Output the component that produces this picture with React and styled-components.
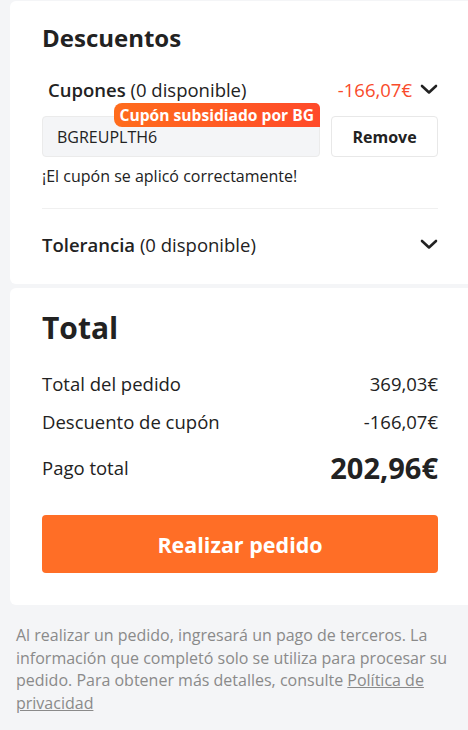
import React from "react";
import styled, { createGlobalStyle } from "styled-components";

const Global = createGlobalStyle`
  html, body { margin: 0; padding: 0; background: #f4f5f7; }
  body { font-family: "Open Sans", "Noto Sans", sans-serif; color: #222; overflow: hidden; }
  * { box-sizing: border-box; }
`;

const Page = styled.div`
  width: 468px;
  padding-top: 1px;
  display: flex;
  flex-direction: column;
  gap: 4px;
`;

const Card = styled.section`
  margin-left: 10px;
  background: #fff;
  border-radius: 6px 0 0 6px;
  padding: ${(p) => p.$pad};
  display: flex;
  flex-direction: column;
`;

const Title = styled.h2`
  margin: 0;
  font-size: ${(p) => p.$size}px;
  line-height: ${(p) => p.$lh}px;
  font-weight: 700;
  color: #222;
`;

const Row = styled.div`
  display: flex;
  align-items: center;
  justify-content: space-between;
  height: ${(p) => p.$h || 24}px;
  margin-top: ${(p) => p.$mt || 0}px;
  padding-left: ${(p) => p.$indent || 0}px;
`;

const Label = styled.span`
  font-size: 18.5px;
  color: #222;
  b { font-weight: 600; }
`;

const RightGroup = styled.div`
  display: flex;
  align-items: center;
  gap: 8px;
`;

const Red = styled.span`
  font-size: 18.5px;
  color: #f94b2b;
`;

const CouponRow = styled.div`
  display: flex;
  gap: 11px;
  margin-top: 15px;
  height: 41px;
`;

const InputWrap = styled.div`
  position: relative;
  flex: 1;
  background: #f4f5f7;
  border: 1px solid #ebebeb;
  border-radius: 4px;
  display: flex;
  align-items: center;
  padding-left: 14px;
  font-size: 16px;
  color: #222;
`;

const Badge = styled.span`
  position: absolute;
  right: -1px;
  top: -14px;
  height: 24px;
  padding: 0 6px;
  display: flex;
  align-items: center;
  border-radius: 8px 5px 0 8px;
  background: linear-gradient(90deg, #ff6c1c 0%, #ff4a2a 100%);
  color: #fff;
  font-size: 15.6px;
  font-weight: 700;
  white-space: nowrap;
`;

const RemoveBtn = styled.button`
  width: 107px;
  background: #fff;
  border: 1px solid #e8e8e8;
  border-radius: 4px;
  font-family: inherit;
  font-size: 16px;
  font-weight: 700;
  color: #222;
  cursor: pointer;
`;

const Note = styled.div`
  margin-top: 9px;
  font-size: 16px;
  line-height: 20px;
  color: #222;
`;

const Divider = styled.hr`
  margin: 22px 0 0;
  border: 0;
  height: 1px;
  background: #f0f0f0;
`;

const Value = styled.span`
  font-size: ${(p) => (p.$big ? 29 : 18.5)}px;
  font-weight: ${(p) => (p.$big ? 700 : 400)};
  color: #222;
`;

const Cta = styled.button`
  margin-top: 28px;
  height: 58px;
  border: 0;
  border-radius: 4px;
  background: #ff6e26;
  color: #fff;
  font-family: inherit;
  font-size: 21.5px;
  font-weight: 700;
  cursor: pointer;
`;

const Footer = styled.p`
  margin: 0;
  padding: 15px 16px 20px 16px;
  font-size: 16px;
  line-height: 22.6px;
  color: #8a8a8a;
  a { color: #8a8a8a; text-decoration: underline; }
`;

const Chevron = () => (
  <svg width="18" height="11" viewBox="0 0 18 11" fill="none">
    <polyline points="2,2 9,8.5 16,2" stroke="#222" strokeWidth="2.6" strokeLinecap="round" strokeLinejoin="round" />
  </svg>
);

export default function App() {
  return (
    <>
      <Global />
      <Page>
        <Card $pad="21px 30px 28px 32px">
          <Title $size={24} $lh={32}>Descuentos</Title>
          <Row $mt={23} $indent={6}>
            <Label><b>Cupones</b> (0 disponible)</Label>
            <RightGroup>
              <Red>-166,07€</Red>
              <Chevron />
            </RightGroup>
          </Row>
          <CouponRow>
            <InputWrap>
              BGREUPLTH6
              <Badge>Cupón subsidiado por BG</Badge>
            </InputWrap>
            <RemoveBtn>Remove</RemoveBtn>
          </CouponRow>
          <Note>¡El cupón se aplicó correctamente!</Note>
          <Divider />
          <Row $mt={23}>
            <Label><b>Tolerancia</b> (0 disponible)</Label>
            <Chevron />
          </Row>
        </Card>
        <Card $pad="20px 30px 32px 32px">
          <Title $size={30} $lh={40}>Total</Title>
          <Row $mt={23}>
            <Label>Total del pedido</Label>
            <Value>369,03€</Value>
          </Row>
          <Row $mt={14}>
            <Label>Descuento de cupón</Label>
            <Value>-166,07€</Value>
          </Row>
          <Row $mt={14} $h={40}>
            <Label>Pago total</Label>
            <Value $big>202,96€</Value>
          </Row>
          <Cta>Realizar pedido</Cta>
        </Card>
        <Footer>
          Al realizar un pedido, ingresará un pago de terceros. La información que completó solo se utiliza para procesar su pedido. Para obtener más detalles, consulte <a href="#">Política de privacidad</a>
        </Footer>
      </Page>
    </>
  );
}
